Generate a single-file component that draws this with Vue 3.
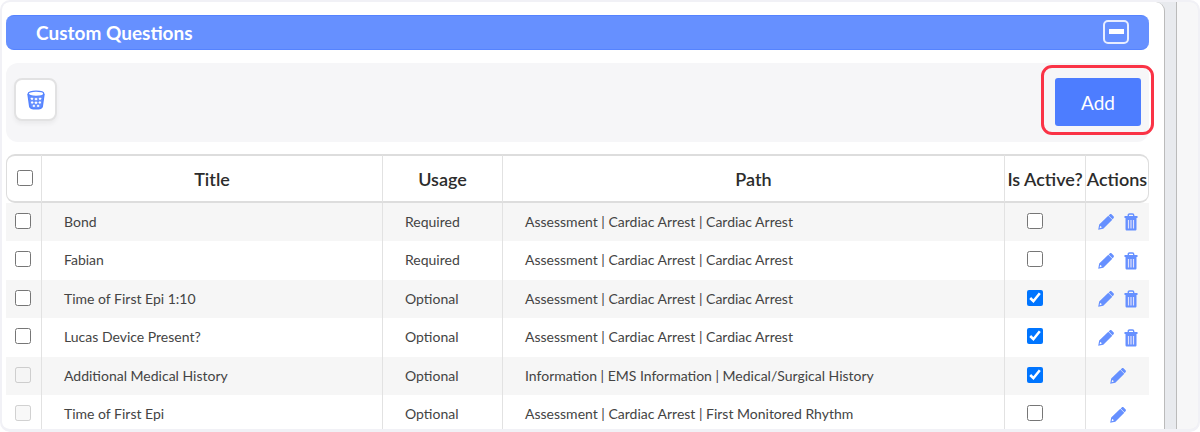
<script setup>
import { ref } from 'vue'

const cardiac = 'Assessment | Cardiac Arrest | Cardiac Arrest'
const questions = ref([
  { title: 'Bond', usage: 'Required', path: cardiac, active: false, own: true, picked: false },
  { title: 'Fabian', usage: 'Required', path: cardiac, active: false, own: true, picked: false },
  { title: 'Time of First Epi 1:10', usage: 'Optional', path: cardiac, active: true, own: true, picked: false },
  { title: 'Lucas Device Present?', usage: 'Optional', path: cardiac, active: true, own: true, picked: false },
  { title: 'Additional Medical History', usage: 'Optional', path: 'Information | EMS Information | Medical/Surgical History', active: true, own: false, picked: false },
  { title: 'Time of First Epi', usage: 'Optional', path: 'Assessment | Cardiac Arrest | First Monitored Rhythm', active: false, own: false, picked: false }
])
</script>

<template>
  <div class="frame">
    <main class="panel">
      <header class="bar">
        <h1>Custom Questions</h1>
        <button class="collapse" type="button" aria-label="Collapse"><span></span></button>
      </header>

      <div class="toolbar">
        <button class="bin" type="button" aria-label="Delete selected">
          <svg viewBox="0 0 18 20" width="18" height="20" fill="none" stroke="#5583ff">
            <path d="M1 4 2.800 16.500c.6 3 11.800 3 12.400 0L17 4" fill="#6690ff" stroke-width="1.500" />
            <path d="M3.300 8.500 5 7.500l1.500 1.200L5 10.200zM7.300 9 9 7.700 10.700 9 9 10.500zM11.500 8.700 13 7.500l1.700 1L13 10.200zM3.800 12.500 5 11l1.700 1.600L5 14zM7.300 12.700 9 11.300l1.700 1.400L9 14.200zM11.300 12.600 13 11l1.200 1.500L13 14zM5.300 16 7 14.500l1.300 1.500L7 17.200zM9.700 16l1.300-1.500 1.700 1.500-1.700 1.200z" fill="#fff" stroke="none" />
            <ellipse cx="9" cy="3.800" rx="7.800" ry="2.600" fill="#fff" stroke-width="1.300" />
          </svg>
        </button>
        <div class="highlight">
          <button class="add" type="button">Add</button>
        </div>
      </div>

      <table>
        <colgroup>
          <col class="c-pick" /><col class="c-title" /><col class="c-usage" /><col /><col class="c-active" /><col class="c-actions" />
        </colgroup>
        <thead>
          <tr>
            <th class="pick"><input type="checkbox" aria-label="Select all" /></th>
            <th>Title</th>
            <th>Usage</th>
            <th>Path</th>
            <th>Is Active?</th>
            <th>Actions</th>
          </tr>
        </thead>
        <tbody>
          <tr v-for="q in questions" :key="q.title">
            <td class="pick"><input v-model="q.picked" type="checkbox" :disabled="!q.own" :aria-label="'Select ' + q.title" /></td>
            <td>{{ q.title }}</td>
            <td>{{ q.usage }}</td>
            <td>{{ q.path }}</td>
            <td class="active"><input v-model="q.active" type="checkbox" :aria-label="q.title + ' is active'" /></td>
            <td class="actions">
              <div>
                <button type="button" :aria-label="'Edit ' + q.title">
                  <svg viewBox="0 0 16 16" width="16" height="16" fill="#6690ff">
                    <path fill-rule="evenodd" d="M.2 15.800 1.200 10.500 10.300 1.700l4 4L5.300 14.700zM1.600 14.300l2-.6c0-.9-.6-1.500-1.400-1.600z" />
                    <path d="m10.700 1.400 1-1c.7-.5 1.400-.4 2 .1l1.800 1.800c.6.6.6 1.300 0 1.900l-1 1z" />
                  </svg>
                </button>
                <button v-if="q.own" type="button" :aria-label="'Delete ' + q.title">
                  <svg viewBox="0 0 14 18" width="14" height="18" fill="none" stroke="#6690ff">
                    <path d="M4.300 3.500V2.200c0-.8.400-1.200 1.200-1.200h3c.8 0 1.200.4 1.200 1.200v1.300" stroke-width="1.400" />
                    <path d="M.5 4h13" stroke-width="2" />
                    <path d="M1.500 5h11v11c0 1-.5 1.500-1.500 1.500H3c-1 0-1.500-.5-1.500-1.500z" fill="#6690ff" stroke="none" />
                    <path d="M4.500 7v8.500M7 7v8.500M9.500 7v8.500" stroke="#dfe0fa" stroke-width="1.200" />
                  </svg>
                </button>
              </div>
            </td>
          </tr>
        </tbody>
      </table>
    </main>
    <div class="gutter"></div>
    <div class="margin"></div>
  </div>
</template>

<style>
body {
  background: #fff;
}
</style>

<style scoped>
.frame {
  box-sizing: border-box;
  display: flex;
  height: 100vh;
  overflow: hidden;
  border: 2px solid #f1f1f6;
  border-bottom-width: 3px;
  border-radius: 10px;
  background: #e8eaee;
  font-family: Lato, "Liberation Sans", sans-serif;
  color: #444;
}
.panel {
  box-sizing: border-box;
  flex: 1;
  min-width: 0;
  padding: 13px 15px 0 4px;
  border-right: 1px solid #bbb;
  border-top-right-radius: 9px;
  background: #fff;
}
.gutter {
  width: 11px;
}
.margin {
  width: 21px;
  border-left: 1px solid #bbb;
  background: #f7f7f8;
}
button {
  margin: 0;
  padding: 0;
  border: 0;
  background: none;
  font: inherit;
  cursor: pointer;
}
svg {
  display: block;
}
.bar {
  box-sizing: border-box;
  display: flex;
  align-items: center;
  justify-content: space-between;
  height: 35px;
  padding: 0 20px 0 30px;
  border: 1px solid #5583ff;
  border-width: 1px 0;
  border-radius: 8px;
  background: #6690ff;
}
h1 {
  margin: 0;
  color: #fff;
  font-size: 19px;
  font-weight: 700;
  line-height: 24px;
}
.collapse {
  display: flex;
  align-items: center;
  justify-content: center;
  box-sizing: border-box;
  width: 26px;
  height: 24px;
  margin-bottom: 2px;
  border: 2px solid #e8eeff;
  border-radius: 5px;
}
.collapse span {
  width: 15px;
  height: 5px;
  background: #fff;
}
.toolbar {
  display: flex;
  align-items: flex-start;
  justify-content: space-between;
  box-sizing: border-box;
  height: 79px;
  margin: 13px 0 12px;
  padding: 15px 9px 0 8px;
  border-radius: 12px;
  background: #f6f6f8;
}
.bin {
  display: flex;
  align-items: center;
  justify-content: center;
  box-sizing: border-box;
  width: 43px;
  height: 43px;
  border: 2px solid #e2e2e3;
  border-radius: 8px;
  background: #fff;
  box-shadow: 0 3px 4px #0000000c;
}
.highlight {
  margin: -13px -14px 0 0;
  padding: 10px 10px 6px 11px;
  border: 3px solid #fa3346;
  border-radius: 11px;
}
.add {
  display: block;
  width: 86px;
  height: 48px;
  border-radius: 3px;
  background: #4d7dff;
  color: #fff;
  font-size: 19px;
}
table {
  width: 100%;
  table-layout: fixed;
  border-collapse: separate;
  border-spacing: 0;
}
.c-pick { width: 36px; }
.c-title { width: 341px; }
.c-usage { width: 120px; }
.c-active { width: 81px; }
.c-actions { width: 63px; }
th {
  box-sizing: border-box;
  height: 49px;
  padding: 0;
  border: 2px solid #ddd;
  border-width: 2px 1px 2px 0;
  border-right-color: #e2e2e2;
  background: #fff;
  color: #2c2c2c;
  font-size: 18px;
  font-weight: 600;
  line-height: 24px;
  white-space: nowrap;
}
th:first-child {
  border-left: 1px solid #ddd;
  border-radius: 9px 0 0 9px;
}
th:last-child {
  border-right-color: #ddd;
  border-radius: 0 9px 9px 0;
}
td {
  box-sizing: border-box;
  height: 38px;
  padding: 0 0 1px 22px;
  border-right: 1px solid #e2e2e2;
  font-size: 14px;
  line-height: 20px;
  white-space: nowrap;
}
td:last-child {
  border-right: 0;
}
tbody tr:nth-child(even) td {
  height: 39px;
}
tbody tr:nth-child(odd) {
  background: #f6f6f6;
}
input {
  display: block;
  width: 16px;
  height: 16px;
  margin: 0 auto;
  accent-color: #0075ff;
}
td.pick,
td.active,
td.actions {
  padding: 0;
}
th.pick input {
  margin: 0 0 2px 10px;
}
td.pick input {
  margin: 0 0 3px 9px;
}
td.active input {
  margin: 0 auto 3px 22px;
}
.actions div {
  display: flex;
  align-items: center;
  justify-content: center;
  gap: 10px;
}
</style>
